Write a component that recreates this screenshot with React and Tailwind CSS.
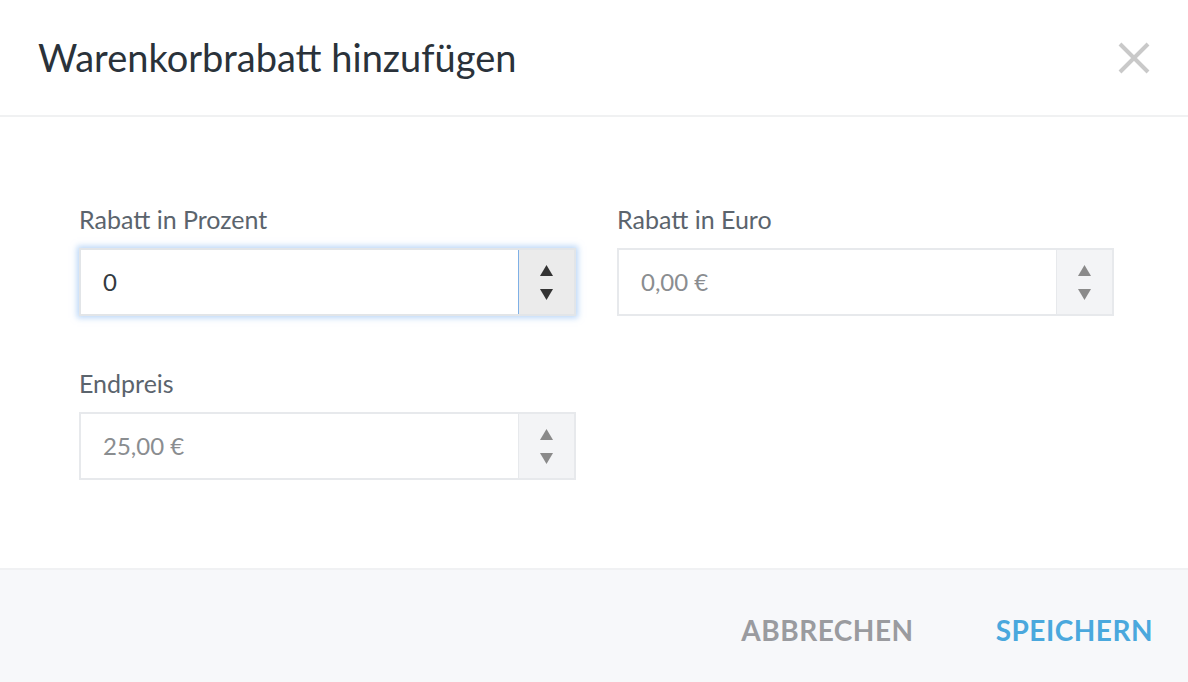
function Spinner({ active }) {
  return (
    <div
      className={
        'flex w-[56px] flex-col items-center justify-center gap-[13px] border-l ' +
        (active ? 'border-[#7fb0e6] bg-[#ebebeb] text-[#333]' : 'border-[#e7e9ec] bg-[#f3f4f6] text-[#8a8a8a]')
      }
    >
      <svg width="13" height="11" viewBox="0 0 13 11"><path d="M6.5 0 L13 11 L0 11 Z" fill="currentColor" /></svg>
      <svg width="13" height="11" viewBox="0 0 13 11"><path d="M0 0 L13 0 L6.5 11 Z" fill="currentColor" /></svg>
    </div>
  );
}

function Field({ label, value, active }) {
  return (
    <div className="flex w-[497px] shrink-0 flex-col">
      <label className="mb-[13px] text-[25px] leading-[32px] text-[#5b646d]">{label}</label>
      <div
        className={
          'flex h-[68px] border-2 ' +
          (active
            ? 'border-[#e2e5e8] shadow-[0_0_6px_2px_rgba(130,180,240,0.55)]'
            : 'border-[#e7e9ec]')
        }
      >
        <div
          className={
            'flex flex-1 items-center bg-white pl-[22px] text-[24px] ' +
            (active ? 'text-[#333a40]' : 'text-[#8a8d90]')
          }
        >
          {value}
        </div>
        <Spinner active={active} />
      </div>
    </div>
  );
}

export default function App() {
  return (
    <div className="flex h-[682px] w-[1188px] flex-col bg-white font-['Lato','Open_Sans',sans-serif]">
      <header className="flex h-[117px] items-center justify-between border-b-2 border-[#f0f1f2] pl-[38px] pr-[38px]">
        <h1 className="text-[38px] font-normal text-[#2a323a]">Warenkorbrabatt hinzufügen</h1>
        <svg width="32" height="32" viewBox="0 0 32 32" className="text-[#c9c9c9]">
          <path d="M2 2 L30 30 M30 2 L2 30" stroke="currentColor" strokeWidth="4" fill="none" />
        </svg>
      </header>

      <main className="flex flex-1 flex-col gap-[51px] px-[79px] pt-[86px]">
        <div className="flex gap-[41px]">
          <Field label="Rabatt in Prozent" value="0" active />
          <Field label="Rabatt in Euro" value="0,00 €" />
        </div>
        <Field label="Endpreis" value="25,00 €" />
      </main>

      <footer className="flex h-[114px] items-center justify-end gap-[82px] border-t-2 border-[#f0f1f3] bg-[#f7f8fa] pr-[35px] pt-[8px]">
        <button className="text-[28px] font-bold tracking-[0.5px] text-[#9a9b9f]">ABBRECHEN</button>
        <button className="text-[28px] font-bold tracking-[0.5px] text-[#4aa8dd]">SPEICHERN</button>
      </footer>
    </div>
  );
}
